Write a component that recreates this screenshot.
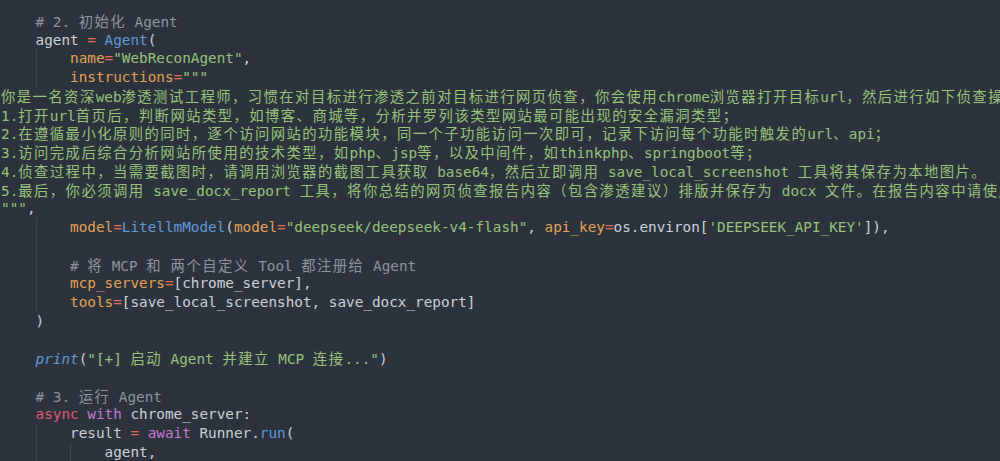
import React from "react";

type Part = [string, string];
type Line = { indent: number; parts: Part[] };

const D = "text-[#ccd0d7]";
const C = "text-[#8e949d]";
const O = "text-[#e2a254]";
const R = "text-[#e36c5c]";
const B = "text-[#5e9ad6]";
const G = "text-[#98c27c]";
const K = "text-[#e2566a]";
const P = "text-[#c17ad2]";
const BI = "text-[#5e9ad6] italic";

const lines: Line[] = [
  { indent: 4, parts: [["# 2. 初始化 Agent", C]] },
  { indent: 4, parts: [["agent ", D], ["=", R], [" ", D], ["Agent", B], ["(", D]] },
  { indent: 8, parts: [["name", O], ["=", R], ['"WebReconAgent"', G], [",", D]] },
  { indent: 8, parts: [["instructions", O], ["=", R], ['"""', G]] },
  { indent: 0, parts: [["你是一名资深web渗透测试工程师，习惯在对目标进行渗透之前对目标进行网页侦查，你会使用chrome浏览器打开目标url，然后进行如下侦查操作：", G]] },
  { indent: 0, parts: [["1.打开url首页后，判断网站类型，如博客、商城等，分析并罗列该类型网站最可能出现的安全漏洞类型；", G]] },
  { indent: 0, parts: [["2.在遵循最小化原则的同时，逐个访问网站的功能模块，同一个子功能访问一次即可，记录下访问每个功能时触发的url、api；", G]] },
  { indent: 0, parts: [["3.访问完成后综合分析网站所使用的技术类型，如php、jsp等，以及中间件，如thinkphp、springboot等；", G]] },
  { indent: 0, parts: [["4.侦查过程中，当需要截图时，请调用浏览器的截图工具获取 base64，然后立即调用 save_local_screenshot 工具将其保存为本地图片。", G]] },
  { indent: 0, parts: [["5.最后，你必须调用 save_docx_report 工具，将你总结的网页侦查报告内容（包含渗透建议）排版并保存为 docx 文件。在报告内容中请使用中文。", G]] },
  { indent: 0, parts: [['"""', G], [",", D]] },
  {
    indent: 8,
    parts: [
      ["model", O], ["=", R], ["LitellmModel", B], ["(", D], ["model", O], ["=", R],
      ['"deepseek/deepseek-v4-flash"', G], [", ", D], ["api_key", O], ["=", R],
      ["os.environ[", D], ["'DEEPSEEK_API_KEY'", G], ["]),", D],
    ],
  },
  { indent: 8, parts: [] },
  { indent: 8, parts: [["# 将 MCP 和 两个自定义 Tool 都注册给 Agent", C]] },
  { indent: 8, parts: [["mcp_servers", O], ["=", R], ["[chrome_server],", D]] },
  { indent: 8, parts: [["tools", O], ["=", R], ["[save_local_screenshot, save_docx_report]", D]] },
  { indent: 4, parts: [[")", D]] },
  { indent: 0, parts: [] },
  { indent: 4, parts: [["print", BI], ["(", D], ['"[+] 启动 Agent 并建立 MCP 连接..."', G], [")", D]] },
  { indent: 0, parts: [] },
  { indent: 4, parts: [["# 3. 运行 Agent", C]] },
  { indent: 4, parts: [["async", K], [" ", D], ["with", P], [" chrome_server:", D]] },
  { indent: 8, parts: [["result ", D], ["=", R], [" ", D], ["await", P], [" Runner.", D], ["run", B], ["(", D]] },
  { indent: 12, parts: [["agent,", D]] },
];

const CJK_RE = /([\u3000-\u303f\u3400-\u9fff\uff00-\uffef]+)/;

function renderText(text: string, key: string) {
  const pieces = text.split(CJK_RE).filter((s) => s.length > 0);
  return pieces.map((p, i) =>
    CJK_RE.test(p) ? (
      <span
        key={key + "-" + i}
        className="tracking-[1.45px] [font-family:'Noto_Sans_CJK_SC',sans-serif]"
      >
        {p}
      </span>
    ) : (
      <span key={key + "-" + i}>{p}</span>
    )
  );
}

function Indent({ cols }: { cols: number }) {
  const blocks = Math.floor(cols / 4);
  const out: React.ReactNode[] = [];
  for (let i = 0; i < blocks; i++) {
    out.push(
      <span
        key={i}
        className={
          i === 0
            ? "inline-block h-[18.74px] w-[4ch] align-top"
            : "inline-block h-[18.74px] w-[4ch] align-top shadow-[inset_1px_0_0_#3f4652]"
        }
      />
    );
  }
  return <>{out}</>;
}

export default function App() {
  return (
    <div className="h-[461px] w-[1000px] overflow-hidden bg-[#2d333d] pl-[1px] pt-[12px] [font-family:'DejaVu_Sans_Mono','Noto_Sans_CJK_SC',monospace] text-[14.33px] leading-[18.74px]">
      {lines.map((ln, li) => (
        <div key={li} className="h-[18.74px] whitespace-pre">
          <Indent cols={ln.indent} />
          {ln.parts.map((pt, pi) => (
            <span key={pi} className={pt[1]}>
              {renderText(pt[0], li + "-" + pi)}
            </span>
          ))}
        </div>
      ))}
    </div>
  );
}
